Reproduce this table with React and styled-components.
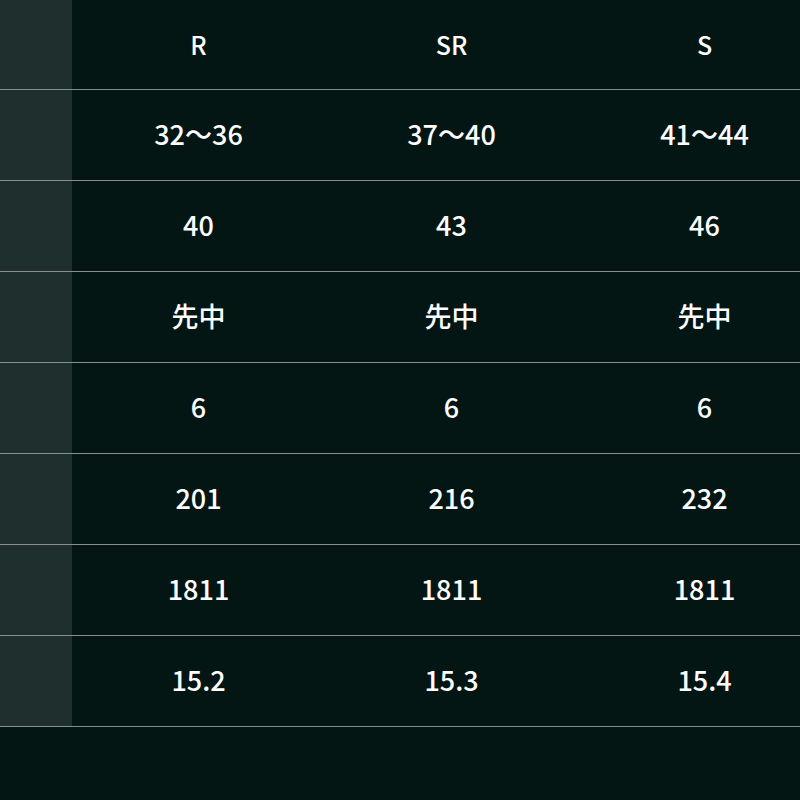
import React from 'react';
import styled, { createGlobalStyle } from 'styled-components';

const bg = '#031614';
const sideBg = '#1f2f2e';
const lineColor = '#8a8f8e';

const GlobalStyle = createGlobalStyle`
  html, body {
    margin: 0;
    padding: 0;
    background: ${bg};
    overflow: hidden;
  }
`;

const Page = styled.div`
  width: 800px;
  height: 800px;
  background: ${bg};
  overflow: hidden;
`;

const Table = styled.div`
  width: 832px;
  margin-top: -1px;
  font-family: 'Noto Sans CJK JP', 'Noto Sans', sans-serif;
  font-weight: 500;
  color: #ffffff;
`;

const Row = styled.div`
  display: grid;
  grid-template-columns: 72px repeat(3, 253px);
  height: 90px;
  border-bottom: 1px solid ${lineColor};
`;

const Side = styled.div`
  background: ${sideBg};
`;

const Cell = styled.div`
  display: flex;
  align-items: center;
  justify-content: center;
  font-size: ${(p) => (p.$head ? '25px' : '27px')};
  padding-bottom: ${(p) => (p.$head ? '0' : '3px')};
`;

const rows = [
  ['R', 'SR', 'S'],
  ['32～36', '37～40', '41～44'],
  ['40', '43', '46'],
  ['先中', '先中', '先中'],
  ['6', '6', '6'],
  ['201', '216', '232'],
  ['1811', '1811', '1811'],
  ['15.2', '15.3', '15.4'],
];

export default function App() {
  return (
    <Page>
      <GlobalStyle />
      <Table>
        {rows.map((r, i) => (
          <Row key={i}>
            <Side />
            {r.map((v, j) => (
              <Cell key={j} $head={i === 0}>
                {v}
              </Cell>
            ))}
          </Row>
        ))}
      </Table>
    </Page>
  );
}
